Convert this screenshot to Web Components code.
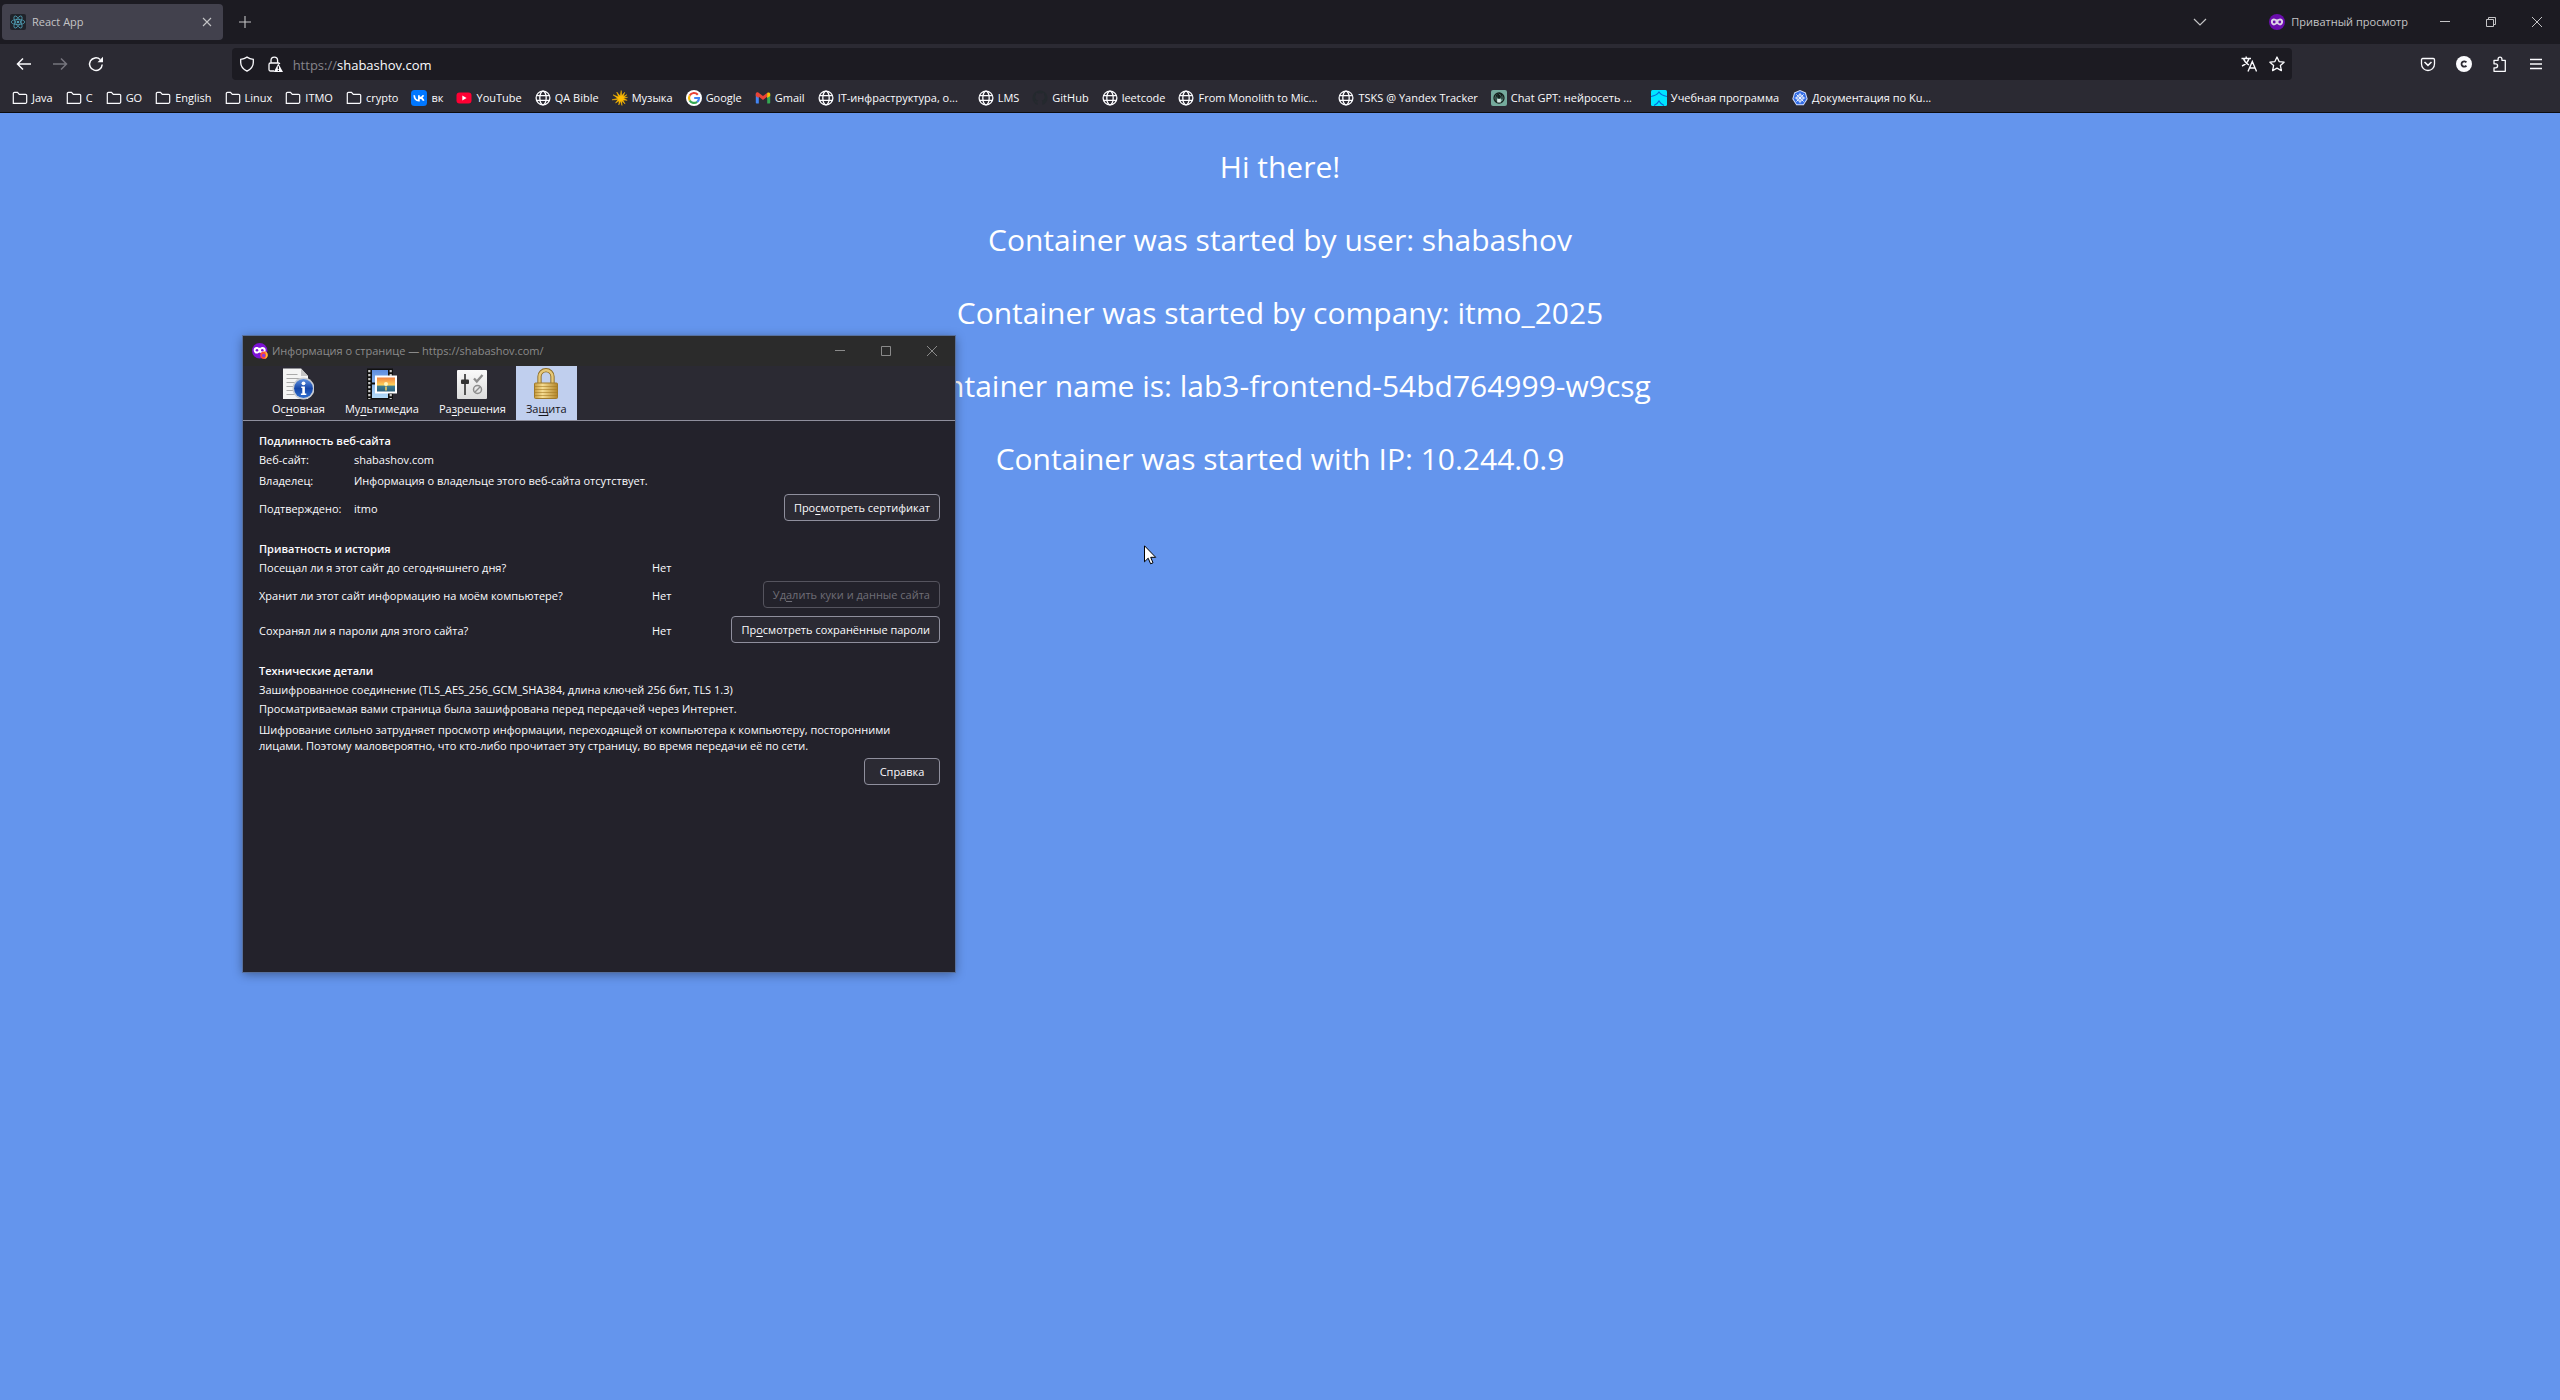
<!DOCTYPE html>
<html lang="ru">
<head>
<meta charset="utf-8">
<title>React App</title>
<style>
  html, body { margin: 0; height: 100%; }
  body {
    display: flex; flex-direction: column; min-height: 100vh; overflow: hidden;
    background: #6495ed; color: #fbfbfe;
    font-family: "Open Sans", "Noto Sans", sans-serif; font-size: 11px; line-height: 16px;
  }
</style>
</head>
<body>
<browser-tabs></browser-tabs>
<nav-bar></nav-bar>
<bookmarks-bar></bookmarks-bar>
<page-content>
  <p>Hi there!</p>
  <p>Container was started by user: shabashov</p>
  <p>Container was started by company: itmo_2025</p>
  <p>Container name is: lab3-frontend-54bd764999-w9csg</p>
  <p>Container was started with IP: 10.244.0.9</p>
  <page-info slot="overlay"></page-info>
  <mouse-pointer slot="overlay"></mouse-pointer>
</page-content>

<script>
const globe = '<g fill="none" stroke="#fbfbfe" stroke-width="1.3"><circle cx="8" cy="8" r="6.9"/><ellipse cx="8" cy="8" rx="3.2" ry="6.9"/><path d="M1.5 5.6h13M1.5 10.4h13"/></g>';
const ICONS = {
  react: '<rect width="16" height="16" rx="2" fill="#20232a"/><g fill="none" stroke="#4f9db3" stroke-width=".8"><ellipse cx="8" cy="8" rx="6.8" ry="2.6"/><ellipse cx="8" cy="8" rx="6.8" ry="2.6" transform="rotate(60 8 8)"/><ellipse cx="8" cy="8" rx="6.8" ry="2.6" transform="rotate(120 8 8)"/></g><circle cx="8" cy="8" r="1.3" fill="#4f9db3"/>',
  closeTab: '<path d="M4 4l8 8M12 4l-8 8" stroke="currentColor" stroke-width="1.1"/>',
  plus: '<path d="M8 2v12M2 8h12" stroke="currentColor" stroke-width="1.1"/>',
  chevron: '<path d="M2 5l6 6 6-6" fill="none" stroke="currentColor" stroke-width="1.2"/>',
  mask: '<circle cx="8" cy="8" r="8" fill="#6a0dad"/><path d="M1.9 7.6c0-2 1.500-3 3-3 1.400 0 2 .8 3.100.8s1.700-.8 3.100-.8c1.500 0 3 1 3 3 0 2.200-1.300 3.800-3.100 3.800-1.500 0-2-1.300-3-1.300s-1.500 1.300-3 1.300c-1.800 0-3.100-1.600-3.100-3.800z" fill="#ddd3e6"/><circle cx="5.200" cy="8" r="1.400" fill="#6a0dad"/><circle cx="10.800" cy="8" r="1.400" fill="#6a0dad"/>',
  maskFox: '<circle cx="7.700" cy="7.700" r="7.700" fill="#7d12d6"/><path d="M1.700 7c0-2 1.500-3 3-3 1.400 0 2 .8 3 .8s1.600-.8 3-.8c1.500 0 3 1 3 3 0 2.200-1.300 3.600-3 3.600-1.500 0-2-1.200-3-1.200s-1.500 1.200-3 1.200c-1.700 0-3-1.400-3-3.600z" fill="#fff"/><circle cx="5" cy="7.300" r="1.300" fill="#7d12d6"/><circle cx="10.300" cy="7.300" r="1.300" fill="#7d12d6"/><circle cx="12" cy="12.200" r="3.700" fill="#ff4b3a"/><path d="M12.500 8c2.500.8 3.500 2.700 3.200 4.600-.3 2-1.900 3.300-3.700 3.400 2.200-1.200 2.800-4.500.5-8z" fill="#ffbd2e"/><circle cx="11.600" cy="12.500" r="1.700" fill="#8a3be0"/>',
  winMin: '<path d="M3 7.500h10" stroke="currentColor"/>',
  winMax: '<path d="M3.500 3.500h9v9h-9z" fill="none" stroke="currentColor"/>',
  winRestore: '<path d="M3.500 5.500h7v7h-7zM5.500 5.500v-2h7v7h-2" fill="none" stroke="currentColor"/>',
  winClose: '<path d="M3 3l10 10M13 3l-10 10" stroke="currentColor"/>',
  back: '<path d="M15 8H1.500M7 2.500L1.500 8 7 13.500" fill="none" stroke="currentColor" stroke-width="1.500"/>',
  forward: '<path d="M1 8h13.500M9 2.500L14.500 8 9 13.500" fill="none" stroke="currentColor" stroke-width="1.500"/>',
  reload: '<path d="M14.200 8.500a6.300 6.300 0 1 1-2-5" fill="none" stroke="currentColor" stroke-width="1.500"/><path d="M15 .8V6.300H9.500z" fill="currentColor"/>',
  shield: '<path d="M8 1.100c2 1.300 4.200 2 6.300 2.300v3c0 3.700-2.500 6.700-6.300 8.700-3.800-2-6.300-5-6.300-8.700v-3C3.800 3.100 6 2.400 8 1.100z" fill="none" stroke="currentColor" stroke-width="1.300"/>',
  lock: '<path d="M4 7V4.500a3.300 3.300 0 0 1 6.600 0V7M7 15H3.500A1.500 1.500 0 0 1 2 13.500v-5A1.500 1.500 0 0 1 3.500 7h8A1.500 1.500 0 0 1 12.800 8" fill="none" stroke="currentColor" stroke-width="1.300"/><path d="M11.300 7.500L16 16H6.800z" fill="currentColor"/><path d="M11.400 10.200v2.800M11.400 13.700v1.200" stroke="#1c1b22" stroke-width="1.200"/>',
  translate: '<path d="M.5 2.500h9.500M5.200 .5v2M8 2.500C7 6 4.500 8.500 1 10M2.500 2.500C3.500 6 5.500 7.500 8 9M7 15.500L11.300 5.500 15.600 15.500M8.600 12h5.400" fill="none" stroke="currentColor" stroke-width="1.400"/>',
  star: '<path d="M8 1l2.100 4.600 5 .6-3.700 3.400 1 5L8 12.100l-4.400 2.500 1-5L.9 6.200l5-.6z" fill="none" stroke="currentColor" stroke-width="1.300" stroke-linejoin="round"/>',
  pocket: '<path d="M2.700 2.500h10.600A1.200 1.200 0 0 1 14.500 3.700V8A6.500 6.500 0 0 1 1.500 8V3.700A1.200 1.200 0 0 1 2.700 2.500z" fill="none" stroke="currentColor" stroke-width="1.300"/><path d="M4.500 6L8 9.400 11.500 6" fill="none" stroke="currentColor" stroke-width="1.500"/>',
  account: '<circle cx="8" cy="8" r="8" fill="#fbfbfe"/><path d="M10.400 6.400a2.700 2.700 0 1 0 0 3.200" fill="none" stroke="#2b2a33" stroke-width="1.800"/>',
  puzzle: '<path d="M2 15.300h11.300v-11H9.900V3a1.900 1.900 0 0 0-3.800 0v1.300H2v3.500h1.600a2 2 0 0 1 0 4H2z" fill="none" stroke="currentColor" stroke-width="1.300" stroke-linejoin="round"/>',
  menu: '<path d="M2 3.500h12M2 8h12M2 12.500h12" stroke="currentColor" stroke-width="1.300"/>',
  folder: '<path d="M1.300 13.300v-9.800a1.200 1.200 0 0 1 1.200-1.200h3l1.800 2h6.200a1.200 1.200 0 0 1 1.200 1.200v6.600a1.200 1.200 0 0 1-1.200 1.200z" fill="none" stroke="currentColor" stroke-width="1.200"/>',
  vk: '<rect width="16" height="16" rx="3.500" fill="#07f"/><path d="M3.200 5.300c.2 3.400 1.800 5.300 4.700 5.300V5.200M12.400 5.200c-.5 1.400-2 2.600-4.200 2.700 2.300 0 3.800 1 4.500 2.900" fill="none" stroke="#fff" stroke-width="1.700"/>',
  youtube: '<rect x=".5" y="2.500" width="15" height="11" rx="3" fill="#f03"/><path d="M6.300 5.500v5l4.300-2.500z" fill="#fff"/>',
  globe,
  music: '<path d="M15.500 7.300l-4 1.300 3.700 1.700-4.300-.3 2.200 4-3.300-3.200.2 4.700L8.500 11 6.800 15l.3-4.300L3.500 13l2.700-3.400L0 9.800l5.800-1.400L1 4.800l5.700 2.300L4.700 2l3.500 4.100L9.200.5l.6 5.300L12.700 2.300l-1.500 4.200 3.700-1.800-3 2.800z" fill="#fb0" stroke="#fb0" stroke-width=".5"/>',
  google: '<circle cx="8" cy="8" r="8" fill="#fff"/><g fill="none" stroke-width="2.200"><path d="M11.800 4.700A5 5 0 0 0 3.700 5.500" stroke="#ea4335"/><path d="M3.700 5.500a5 5 0 0 0 0 5" stroke="#fbbc05"/><path d="M3.700 10.500a5 5 0 0 0 7.500 1.300" stroke="#34a853"/><path d="M11.200 11.800A5 5 0 0 0 13 8H8.200" stroke="#4285f4"/></g>',
  gmail: '<path d="M.8 3.500h3v10H1.500a.7.700 0 0 1-.7-.7z" fill="#4285f4"/><path d="M12.200 3.500h3v9.300a.7.700 0 0 1-.7.700h-2.300z" fill="#34a853"/><path d="M.8 6V4c0-1.600 1.700-2.200 2.800-1.300L8 6l4.400-3.300V6.600L8 9.900 3.600 6.600v1.600z" fill="#ea4335"/><path d="M12.200 2.900c1.300-1 3-.4 3 1.200v2L12.200 8z" fill="#fbbc04"/>',
  github: '<path d="M8 .5a7.500 7.500 0 0 0-2.400 14.600v-2.500c-2.200.3-2.700-1.300-3-1.900 1 .1 1.500 1.300 3 .8.100-.6.300-.9.600-1.100C4 10 3.300 8.700 3.300 6.900c0-.8.300-1.500.8-2.100-.3-.7-.2-1.400.1-2 .8 0 1.500.4 2 .8a7 7 0 0 1 3.600 0c.6-.4 1.300-.8 2-.8.400.6.400 1.300.1 2 .5.600.8 1.300.8 2.100 0 1.900-.8 3.100-2.900 3.500.5.400.6 1 .6 1.700v3A7.500 7.500 0 0 0 8 .5z" fill="#24292e"/>',
  gpt: '<rect width="16" height="16" rx="2" fill="#74aa9c"/><g fill="none" stroke="#14201c" stroke-width="1.300"><circle cx="8" cy="8" r="5"/><path d="M8 3.500a3 3 0 0 1 3 3v3M5 12V7a3 3 0 0 1 3-2.500"/></g><circle cx="8" cy="6.700" r="2" fill="#14201c"/><path d="M6.300 9h3.400v3.500H6.300z" fill="#d8e6e2"/>',
  study: '<rect width="16" height="16" rx="1.500" fill="#00e5ff"/><path d="M0 6.500C4 5.800 6.500 4.200 8 2c1.500 2.200 4 3.800 8 4.500M3 15.500c2-1 4-2.700 5-4.500 1 1.800 3 3.500 5 4.500" fill="none" stroke="#0868d8" stroke-width="1.200"/>',
  kube: '<path d="M8 0l5.800 2.500L15.700 9l-4 6.200H4.300L.3 9l1.900-6.500z" fill="#d4defa"/><path d="M8 1l5 2.300 1.600 5.500-3.300 5.400H4.700L1.400 8.800 3 3.300z" fill="#326ce5"/><circle cx="8" cy="8" r="3.300" fill="none" stroke="#fff" stroke-width=".9"/><path d="M8 2.800v10.400M2.800 8h10.400M4.300 4.300l7.400 7.400M11.700 4.300l-7.400 7.400" stroke="#fff" stroke-width=".8"/>'
};
const BIG = {
  general: '<defs><linearGradient id="a" x2="0" y2="1"><stop stop-color="#5c8fe0"/><stop offset=".5" stop-color="#1546a8"/><stop offset="1" stop-color="#2f6fd0"/></linearGradient></defs><path d="M1 .5h18l7 7.500v23H1z" fill="#f4f4f4"/><path d="M19 .5V8h7z" fill="#c4c4c4"/><path d="M4.500 6.500h11M4.500 10.500h14M4.500 14.500h10M4.500 18.500h7M4.500 22.500h7M4.500 26.500h9" stroke="#aaa" stroke-width="1.200"/><circle cx="21.500" cy="20.500" r="11" fill="#c9cdd3"/><circle cx="21.500" cy="20.500" r="9.400" fill="url(#a)"/><circle cx="21.500" cy="15.300" r="1.900" fill="#fff"/><path d="M19.300 18.500h3.600v7h1.400v1.400h-5.400v-1.400h1.400v-5.500h-1z" fill="#fff"/>',
  media: '<defs><linearGradient id="b" x2="0" y2="1"><stop stop-color="#f08040"/><stop offset=".55" stop-color="#ffd35a"/><stop offset=".6" stop-color="#3f7c90"/><stop offset="1" stop-color="#28607c"/></linearGradient><linearGradient id="c" x2="0" y2="1"><stop stop-color="#5e8de0"/><stop offset="1" stop-color="#b4dcf8"/></linearGradient></defs><path d="M1 .5h26v31H1z" fill="#111"/><path d="M6 2h16v12.500H6zM6 16.500h16V30H6z" fill="url(#c)"/><path d="M3.300 2v29M24.700 2v29" stroke="#c7c7c7" stroke-width="2.200" stroke-dasharray="2.200 1.800"/><path d="M9 7.500h22v18H9z" fill="#fff"/><path d="M11 9.500h18v14H11z" fill="url(#b)"/><circle cx="20" cy="16" r="2" fill="#fff6c0"/><path d="M20 18.500v4" stroke="#ffd35a" stroke-width="1.500"/>',
  perms: '<defs><linearGradient id="d" x2="0" y2="1"><stop stop-color="#fafafa"/><stop offset="1" stop-color="#dcdcdc"/></linearGradient></defs><rect x="1" y="2" width="30" height="29" rx="1" fill="url(#d)"/><path d="M9 6v21" stroke="#454545" stroke-width="1.800"/><rect x="5" y="11.500" width="8" height="4.500" rx="1" fill="#333"/><path d="M18 10.500l2.800 3 5.700-6.500" fill="none" stroke="#8d8d8d" stroke-width="2.300"/><circle cx="21.500" cy="21.500" r="4" fill="none" stroke="#8d8d8d" stroke-width="1.500"/><path d="M18.800 24.300l5.400-5.600" stroke="#8d8d8d" stroke-width="1.400"/>',
  security: '<defs><linearGradient id="e" x2="1" y2="0"><stop stop-color="#c69a3c"/><stop offset=".35" stop-color="#f5dc92"/><stop offset="1" stop-color="#b38528"/></linearGradient></defs><path d="M9.500 17V8.500a6.500 6.300 0 0 1 13 0V17" fill="none" stroke="#8b6a22" stroke-width="4.200"/><path d="M9.500 17V8.500a6.500 6.300 0 0 1 13 0V17" fill="none" stroke="#e6c878" stroke-width="2.400"/><rect x="4.500" y="15" width="23" height="15.500" rx="1" fill="url(#e)" stroke="#a07a2a"/><path d="M5 18.500h22M5 21.500h22M5 24.500h22M5 27.500h22" stroke="#a47a24" stroke-width=".8" opacity=".75"/>'
};

class Base extends HTMLElement {
  connectedCallback() {
    if (this.shadowRoot) return;
    this.attachShadow({ mode: 'open' }).innerHTML = this.render();
  }
}

/* Inline icon: <ui-icon name="star"> at 16px, or <ui-icon name="media" big> at 32px */
customElements.define('ui-icon', class extends Base {
  render() {
    const big = this.hasAttribute('big');
    const s = big ? 32 : 16;
    return `<style>:host{display:block;flex:none;width:${s}px;height:${s}px}svg{display:block}</style>
      <svg width="${s}" height="${s}" viewBox="0 0 ${s} ${s}" aria-hidden="true">${(big ? BIG : ICONS)[this.getAttribute('name')]}</svg>`;
  }
});

/* Flat icon button; its box is set with --w and --h */
customElements.define('icon-button', class extends Base {
  render() {
    return `<style>:host{display:block;flex:none}
      button{display:flex;align-items:center;justify-content:center;width:var(--w,36px);height:var(--h,32px);padding:0;border:0;background:none;color:inherit;font:inherit}
      :host([disabled]) button{color:#76757e}</style>
      <button type="button" aria-label="${this.getAttribute('label')}" ${this.hasAttribute('disabled') ? 'disabled' : ''}><ui-icon name="${this.getAttribute('icon')}"></ui-icon></button>`;
  }
});

customElements.define('browser-tabs', class extends Base {
  render() {
    return `<style>
      :host{display:flex;align-items:center;height:44px;flex:none;background:#1c1b22;color:#c4c4c6}
      .tab{display:flex;align-items:center;box-sizing:border-box;width:221px;height:36px;margin-left:2px;padding-left:8px;gap:6px;border-radius:4px;background:#42414d}
      .tab span{flex:1}
      .tab icon-button{--w:32px}
      .new{margin-left:4px}
      .spacer{flex:1}
      .private{display:flex;align-items:center;gap:6px;margin:0 14px 0 51px}
      .win{--w:46px}
    </style>
    <div class="tab" role="tab" aria-selected="true"><ui-icon name="react"></ui-icon><span>React App</span><icon-button icon="closeTab" label="Закрыть вкладку"></icon-button></div>
    <icon-button class="new" icon="plus" label="Новая вкладка"></icon-button>
    <div class="spacer"></div>
    <icon-button icon="chevron" label="Список вкладок"></icon-button>
    <div class="private"><ui-icon name="mask"></ui-icon><span>Приватный просмотр</span></div>
    <icon-button class="win" icon="winMin" label="Свернуть"></icon-button>
    <icon-button class="win" icon="winRestore" label="Восстановить"></icon-button>
    <icon-button class="win" icon="winClose" label="Закрыть"></icon-button>`;
  }
});

customElements.define('nav-bar', class extends Base {
  render() {
    return `<style>
      :host{display:flex;align-items:center;height:40px;flex:none;padding:0 6px;background:#2b2a33}
      .spring{flex:2}
      .url{flex:35;display:flex;align-items:center;box-sizing:border-box;height:32px;padding:0 1px;border-radius:4px;background:#1c1b22;--w:28px}
      label,input{box-sizing:border-box;height:32px;padding:2px 0 0;font-size:13px;line-height:30px}
      label{margin-left:4px;color:#85848b}
      input{flex:1;min-width:0;border:0;outline:0;background:none;color:#fbfbfe;font-family:inherit}
    </style>
    <icon-button icon="back" label="Назад"></icon-button>
    <icon-button icon="forward" label="Вперёд" disabled></icon-button>
    <icon-button icon="reload" label="Обновить"></icon-button>
    <div class="spring"></div>
    <div class="url">
      <icon-button icon="shield" label="Защита"></icon-button>
      <icon-button icon="lock" label="Соединение"></icon-button>
      <label for="address">https://</label><input id="address" type="text" value="shabashov.com">
      <icon-button icon="translate" label="Перевести"></icon-button>
      <icon-button icon="star" label="Добавить закладку"></icon-button>
    </div>
    <div class="spring"></div>
    <icon-button icon="pocket" label="Pocket"></icon-button>
    <icon-button icon="account" label="Аккаунт"></icon-button>
    <icon-button icon="puzzle" label="Расширения"></icon-button>
    <icon-button icon="menu" label="Меню"></icon-button>`;
  }
});

/* Bookmark link; [long] gives it the full width of a shortened title */
customElements.define('bookmark-item', class extends Base {
  render() {
    return `<style>:host{display:block;flex:none}:host([long]){width:147px}
      a{display:flex;align-items:center;gap:4px;color:inherit;text-decoration:none;white-space:nowrap}</style>
      <a href="#"><ui-icon name="${this.getAttribute('icon')}"></ui-icon><span><slot></slot></span></a>`;
  }
});

customElements.define('bookmarks-bar', class extends Base {
  render() {
    const items = [['folder','Java'],['folder','C'],['folder','GO'],['folder','English'],['folder','Linux'],['folder','ITMO'],['folder','crypto'],['vk','вк'],['youtube','YouTube'],['globe','QA Bible'],['music','Музыка'],['google','Google'],['gmail','Gmail'],['globe','IT-инфраструктура, о...'],['globe','LMS'],['github','GitHub'],['globe','leetcode'],['globe','From Monolith to Mic...'],['globe','TSKS @ Yandex Tracker'],['gpt','Chat GPT: нейросеть ...'],['study','Учебная программа'],['kube','Документация по Ku...']];
    return `<style>:host{display:flex;align-items:center;gap:13px;height:28px;flex:none;padding:0 12px;background:#2b2a33;border-bottom:1px solid #0c0c0d}</style>
      ${items.map(([i, t]) => `<bookmark-item icon="${i}"${t.endsWith('...') ? ' long' : ''}>${t}</bookmark-item>`).join('')}`;
  }
});

customElements.define('page-content', class extends Base {
  render() {
    return `<style>
      :host{display:block;position:relative;flex:1;background:#6495ed;color:#fff;text-align:center}
      .text{display:flex;flex-direction:column;gap:30px;padding-top:32px;font-size:30px;line-height:43px}
      ::slotted(p){margin:0}
    </style><div class="text"><slot></slot></div><slot name="overlay"></slot>`;
  }
});

customElements.define('mouse-pointer', class extends Base {
  render() {
    return `<style>:host{position:absolute;left:1144px;top:432px}svg{display:block}</style>
      <svg width="13" height="20" viewBox="0 0 13 20"><path d="M.5 .8V16.800L4.200 13.200 6.600 18.800 9 17.800 6.700 12.300h5z" fill="#fff" stroke="#000"/></svg>`;
  }
});

customElements.define('push-button', class extends Base {
  render() {
    return `<style>:host{display:block;flex:none}
      button{box-sizing:border-box;height:27px;min-width:76px;padding:0 9px;border:1px solid #8f8f9d;border-radius:4px;background:#2b2a33;color:#fbfbfe;font:inherit;white-space:nowrap}
      button:disabled{border-color:#55545e;background:#23222b;color:#6f6e77}
      ::slotted(u){text-underline-offset:2px}</style>
      <button type="button" ${this.hasAttribute('disabled') ? 'disabled' : ''}><slot></slot></button>`;
  }
});

customElements.define('info-tab', class extends Base {
  render() {
    return `<style>:host{display:block}
      button{display:flex;flex-direction:column;align-items:center;gap:1px;box-sizing:border-box;height:54px;padding:2px 10px 0;border:0;background:none;color:inherit;font:inherit}
      :host([selected]) button{background:#c0cfee;color:#15141a}
      ::slotted(u){text-underline-offset:2px}</style>
      <button type="button" role="tab" aria-selected="${this.hasAttribute('selected')}"><ui-icon big name="${this.getAttribute('icon')}"></ui-icon><span><slot></slot></span></button>`;
  }
});

customElements.define('page-info', class extends Base {
  render() {
    return `<style>
      :host{position:absolute;left:243px;top:223px;box-sizing:border-box;width:712px;min-height:636px;background:#23222b;color:#fbfbfe;font-size:11px;line-height:16px;text-align:left;box-shadow:0 0 0 1px #56709f,0 2px 10px rgba(0,0,0,.4)}
      header{display:flex;align-items:center;height:30px;padding-left:9px;background:#2b2b2b;color:#8a8a8a;--w:46px;--h:30px}
      header span{flex:1;margin-left:4px}
      nav{display:flex;padding-left:19px;background:#2b2a33;border-bottom:1px solid #8f8f9d}
      main{display:flex;flex-direction:column;padding:12px 15px 12px 16px}
      h2{margin:0 0 3px;font-size:11px;line-height:16px;font-weight:600}
      section{margin-bottom:17px}
      dl{display:grid;gap:5px 0;margin:0}
      .who{grid-template-columns:95px 1fr auto}
      .history{grid-template-columns:393px 1fr auto}
      dt,dd{margin:0}
      .mid{align-self:center}
      .wide{grid-column:span 2}
      .action{display:flex;justify-content:flex-end;padding-bottom:3px}
      p{margin:0 0 3px}
      p.last{margin:2px 24px 4px 0}
      footer{display:flex;justify-content:flex-end}
    </style>
    <header><ui-icon name="maskFox"></ui-icon><span>Информация о странице — https://shabashov.com/</span>
      <icon-button icon="winMin" label="Свернуть"></icon-button><icon-button icon="winMax" label="Развернуть"></icon-button><icon-button icon="winClose" label="Закрыть"></icon-button></header>
    <nav role="tablist">
      <info-tab icon="general">Ос<u>н</u>овная</info-tab><info-tab icon="media">Му<u>л</u>ьтимедиа</info-tab><info-tab icon="perms">Ра<u>з</u>решения</info-tab><info-tab icon="security" selected>За<u>щ</u>ита</info-tab>
    </nav>
    <main>
      <section><h2>Подлинность веб-сайта</h2>
        <dl class="who">
          <dt>Веб-сайт:</dt><dd class="wide">shabashov.com</dd>
          <dt>Владелец:</dt><dd class="wide">Информация о владельце этого веб-сайта отсутствует.</dd>
          <dt class="mid">Подтверждено:</dt><dd class="mid">itmo</dd><dd class="action"><push-button>Про<u>с</u>мотреть сертификат</push-button></dd>
        </dl></section>
      <section><h2>Приватность и история</h2>
        <dl class="history">
          <dt>Посещал ли я этот сайт до сегодняшнего дня?</dt><dd class="wide">Нет</dd>
          <dt class="mid">Хранит ли этот сайт информацию на моём компьютере?</dt><dd class="mid">Нет</dd><dd class="action"><push-button disabled>Уд<u>а</u>лить куки и данные сайта</push-button></dd>
          <dt class="mid">Сохранял ли я пароли для этого сайта?</dt><dd class="mid">Нет</dd><dd class="action"><push-button>Пр<u>о</u>смотреть сохранённые пароли</push-button></dd>
        </dl></section>
      <h2>Технические детали</h2>
      <p>Зашифрованное соединение (TLS_AES_256_GCM_SHA384, длина ключей 256 бит, TLS 1.3)</p>
      <p>Просматриваемая вами страница была зашифрована перед передачей через Интернет.</p>
      <p class="last">Шифрование сильно затрудняет просмотр информации, переходящей от компьютера к компьютеру, посторонними лицами. Поэтому маловероятно, что кто-либо прочитает эту страницу, во время передачи её по сети.</p>
      <footer><push-button>Справка</push-button></footer>
    </main>`;
  }
});
</script>
</body>
</html>
